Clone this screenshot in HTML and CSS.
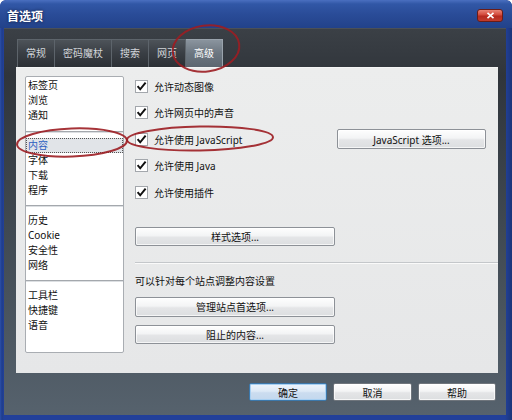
FILE: index.html
```html
<!DOCTYPE html>
<html lang="zh-CN">
<head>
<meta charset="utf-8">
<title>首选项</title>
<link rel="stylesheet" href="styles.css">
</head>
<body>
<div class="window">
  <div class="titlebar">
    <span class="title">首选项</span>
    <span class="close"><svg width="9" height="7" viewBox="0 0 9 7"><path d="M1.5 0.8 L7.5 6.2 M7.5 0.8 L1.5 6.2" stroke="#fff" stroke-width="1.6" fill="none"/></svg></span>
  </div>
  <div class="frame">
    <div class="tabs">
      <div class="tab">常规</div>
      <div class="tab">密码魔杖</div>
      <div class="tab">搜索</div>
      <div class="tab">网页</div>
      <div class="tab active">高级</div>
    </div>
    <div class="panel">
      <div class="list">
        <div class="group g1">
          <div class="item">标签页</div>
          <div class="item">浏览</div>
          <div class="item">通知</div>
        </div>
        <div class="group g2">
          <div class="item selected">内容</div>
          <div class="item">字体</div>
          <div class="item">下载</div>
          <div class="item">程序</div>
        </div>
        <div class="group">
          <div class="item">历史</div>
          <div class="item">Cookie</div>
          <div class="item">安全性</div>
          <div class="item">网络</div>
        </div>
        <div class="group">
          <div class="item">工具栏</div>
          <div class="item">快捷键</div>
          <div class="item">语音</div>
        </div>
      </div>
      <div class="main">
        <div class="checks">
          <div class="check"><svg class="box" width="13" height="13" viewBox="0 0 13 13"><rect x="0.5" y="0.5" width="12" height="12" fill="#fff" stroke="#a3a7ac"/><path d="M2.6 6.2 L5.2 9.3 L10.6 2.6" fill="none" stroke="#111" stroke-width="2"/></svg>允许动态图像</div>
          <div class="check"><svg class="box" width="13" height="13" viewBox="0 0 13 13"><rect x="0.5" y="0.5" width="12" height="12" fill="#fff" stroke="#a3a7ac"/><path d="M2.6 6.2 L5.2 9.3 L10.6 2.6" fill="none" stroke="#111" stroke-width="2"/></svg>允许网页中的声音</div>
          <div class="check"><svg class="box" width="13" height="13" viewBox="0 0 13 13"><rect x="0.5" y="0.5" width="12" height="12" fill="#fff" stroke="#a3a7ac"/><path d="M2.6 6.2 L5.2 9.3 L10.6 2.6" fill="none" stroke="#111" stroke-width="2"/></svg>允许使用 JavaScript<button class="btn js-btn">JavaScript 选项...</button></div>
          <div class="check"><svg class="box" width="13" height="13" viewBox="0 0 13 13"><rect x="0.5" y="0.5" width="12" height="12" fill="#fff" stroke="#a3a7ac"/><path d="M2.6 6.2 L5.2 9.3 L10.6 2.6" fill="none" stroke="#111" stroke-width="2"/></svg>允许使用 Java</div>
          <div class="check"><svg class="box" width="13" height="13" viewBox="0 0 13 13"><rect x="0.5" y="0.5" width="12" height="12" fill="#fff" stroke="#a3a7ac"/><path d="M2.6 6.2 L5.2 9.3 L10.6 2.6" fill="none" stroke="#111" stroke-width="2"/></svg>允许使用插件</div>
        </div>
        <button class="btn wide style-btn">样式选项...</button>
        <div class="sep"></div>
        <div class="note">可以针对每个站点调整内容设置</div>
        <button class="btn wide manage-btn">管理站点首选项...</button>
        <button class="btn wide block-btn">阻止的内容...</button>
      </div>
    </div>
    <div class="footer">
      <button class="btn fbtn default">确定</button>
      <button class="btn fbtn cancel">取消</button>
      <button class="btn fbtn">帮助</button>
    </div>
  </div>
  <svg class="annot" width="512" height="420" viewBox="0 0 512 420">
    <ellipse cx="206" cy="48.5" rx="33.5" ry="23" transform="rotate(-8 206 48.5)" />
    <ellipse cx="72" cy="142.5" rx="55" ry="14" transform="rotate(-2 72 142.5)" />
    <ellipse cx="200" cy="138.5" rx="73" ry="12" transform="rotate(-1 200 138.5)" />
  </svg>
</div>
</body>
</html>
```
FILE: styles.css
```css
* { box-sizing: border-box; }
html, body { margin: 0; padding: 0; background: #fff; }
body {
  font-family: "Noto Sans", "Noto Sans CJK SC", sans-serif;
  font-size: 10px;
  color: #111;
}
.window {
  position: relative;
  width: 512px;
  height: 420px;
  display: flex;
  flex-direction: column;
  background: linear-gradient(90deg, #2b4fa8 0, #1f3d8c 2px, #22409a 4px, #22409a 505px, #1a3578 512px);
  border-radius: 6px 6px 0 0;
  overflow: hidden;
}
.titlebar {
  height: 28px;
  flex: none;
  display: flex;
  align-items: center;
  justify-content: space-between;
  padding: 2px 9px 0 7px;
  background: linear-gradient(#4a6fc0 0, #3157a6 4px, #2a4c98 50%, #22428a 100%);
  border-radius: 6px 6px 0 0;
}
.title {
  color: #fff;
  font-size: 12px;
  font-weight: bold;
  font-family: "Noto Sans CJK SC", sans-serif;
  text-shadow: 0 0 3px rgba(0, 0, 20, .7);
}
.close {
  width: 26px;
  height: 13px;
  display: flex;
  align-items: center;
  justify-content: center;
  border: 1px solid #6a1c18;
  border-radius: 3px;
  background: linear-gradient(#e98576 0, #d2483a 45%, #b42a1f 55%, #c23b2c 100%);
}
.frame {
  flex: 1;
  margin: 0 6px 5px 4px;
  padding: 10px 8px 0 12px;
  display: flex;
  flex-direction: column;
  background: linear-gradient(#3b4046 0, #30353b 12%, #3f4851 50%, #56626d 100%);
  border-top: 1px solid #4a5058;
}
.tabs {
  display: flex;
  height: 28px;
  margin-left: 1px;
  flex: none;
}
.tab {
  height: 28px;
  line-height: 27px;
  padding: 0 8px;
  color: #d2d6da;
  font-size: 10px;
  border: 1px solid #5d646b;
  border-left: none;
  border-bottom: none;
  background: linear-gradient(#4d5359 0, #393e44 50%, #2c3035 100%);
}
.tab:first-child { border-left: 1px solid #5d646b; }
.tab.active {
  color: #fff;
  background: linear-gradient(#8a949e 0, #6c7680 50%, #5c6670 100%);
  border-color: #9aa3ac;
}
.panel {
  height: 306px;
  flex: none;
  display: flex;
  align-items: flex-start;
  padding-left: 9px;
  background: linear-gradient(#eceded, #e6e7e8);
  border-top: 1px solid #f4f5f5;
}
.list {
  width: 99px;
  height: 277px;
  margin-top: 8px;
  background: #fff;
  border: 1px solid #a9adb2;
  border-radius: 2px;
  display: flex;
  flex-direction: column;
}
.group {
  padding: 7px 0 7px;
  border-bottom: 1px solid #a4a8ad;
  box-shadow: 0 1px 0 #dcdfe2;
}
.group:last-child { border-bottom: none; box-shadow: none; }
.group.g1 { padding: 1px 0 8px; }
.group.g2 { padding: 6px 0 7px; }
.item {
  height: 15px;
  line-height: 15px;
  padding-left: 2px;
  white-space: nowrap;
}
.item.selected {
  color: #2c5fc0;
  background: #e1e4e8;
  border: 1px dotted #555;
  line-height: 13px;
  padding-left: 1px;
}
.main {
  flex: 1;
  margin-left: 11px;
  padding-top: 5px;
  display: flex;
  flex-direction: column;
  align-items: flex-start;
}
.checks { align-self: stretch; }
.check {
  height: 26.5px;
  display: flex;
  align-items: center;
  white-space: nowrap;
}
.box { flex: none; margin-right: 6px; }
.btn {
  font-family: "Noto Sans", "Noto Sans CJK SC", sans-serif;
  font-size: 10px;
  color: #111;
  padding: 0;
  border: 1px solid #8d9197;
  border-radius: 2px;
  background: linear-gradient(#fefefe 0, #f3f4f5 45%, #e4e5e7 55%, #dcdee0 100%);
  box-shadow: inset 0 0 0 1px rgba(255, 255, 255, .7);
}
.js-btn {
  width: 149px;
  height: 20px;
  margin-left: auto;
  margin-right: 12px;
}
.wide { width: 200px; }
.style-btn { height: 19px; margin-top: 21px; }
.sep {
  align-self: stretch;
  height: 2px;
  margin-top: 16px;
  border-top: 1px solid #c4c7ca;
  border-bottom: 1px solid #fafafa;
}
.note {
  margin-top: 10px;
  line-height: 15px;
  white-space: nowrap;
}
.manage-btn { height: 20px; margin-top: 8px; }
.block-btn { height: 19px; margin-top: 8px; }
.footer {
  display: flex;
  justify-content: flex-end;
  gap: 6px;
  margin-top: 10px;
  padding-right: 2px;
}
.fbtn { width: 78px; height: 18px; border-color: #6f757c; }
.fbtn.cancel { width: 79px; }
.fbtn.default {
  border-color: #3c78ab;
  background: linear-gradient(#eef5fc 0, #dde9f6 45%, #cbdcef 55%, #c3d8ee 100%);
  box-shadow: inset 0 0 0 1px #a8d0f2;
}
.annot {
  position: absolute;
  left: 0;
  top: 0;
  pointer-events: none;
}
.annot ellipse {
  fill: none;
  stroke: #9c1d22;
  stroke-width: 2;
  stroke-opacity: .9;
}
```
